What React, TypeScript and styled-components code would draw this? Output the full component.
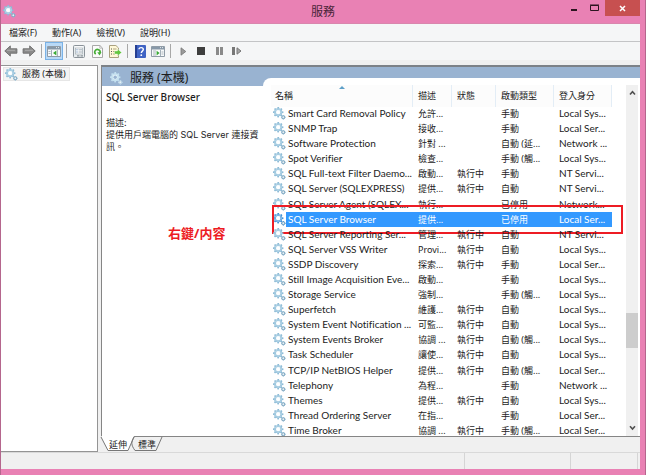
import React from "react";
import styled, { createGlobalStyle, css } from "styled-components";

const Global = createGlobalStyle`
  *, *::before, *::after { box-sizing: border-box; }
  html, body, #root { height: 100%; margin: 0; }
  body {
    font-family: "Noto Sans", "Noto Sans CJK TC", sans-serif;
    font-size: 10px;
    font-variant-ligatures: none;
    color: #1c1c1c;
    overflow: hidden;
  }
  button { font: inherit; color: inherit; background: none; border: 0; padding: 0; margin: 0; }
  svg { flex: none; }
`;

const Frame = styled.div`
  height: 100%;
  display: flex;
  flex-direction: column;
  background: #e981b4;
  border-left: 1px solid #b5668d;
  border-right: 1px solid #b5668d;
`;

const TitleBar = styled.header`
  flex: none;
  height: 23px;
  display: grid;
  grid-template-columns: 1fr auto 1fr;
  align-items: start;
`;

const TitleIcon = styled.span`
  display: flex;
  padding: 5px 0 0 2px;
`;

const Title = styled.h1`
  margin: 0;
  font-size: 12px;
  line-height: 24px;
  font-weight: 400;
  color: #4a2438;
`;

const WindowButtons = styled.div`
  display: flex;
  justify-content: flex-end;
  padding-right: 5px;
`;

const WindowButton = styled.button<{ $close?: boolean }>`
  width: ${(p) => (p.$close ? 35 : 21)}px;
  height: 16px;
  display: flex;
  align-items: center;
  justify-content: center;
  background: ${(p) => (p.$close ? "#c75050" : "transparent")};
`;

const Client = styled.div`
  flex: 1;
  min-height: 0;
  margin: 0 5px 6px 0;
  display: flex;
  flex-direction: column;
  background: #f0f0f0;
  border-top: 1px solid #d986ad;
`;

const MenuBar = styled.nav`
  flex: none;
  height: 18px;
  display: flex;
  align-items: center;
  gap: 15px;
  padding-left: 8px;
  background: #f5f6f7;
  border-bottom: 1px solid #c3c4c6;
`;

const MenuItem = styled.button`
  font-size: 9px;
  line-height: 16px;
  white-space: nowrap;
`;

const ToolBar = styled.div`
  flex: none;
  height: 18px;
  display: flex;
  align-items: center;
  background: #f5f6f7;
  padding-left: 1px;
`;

const Tool = styled.button<{ $active?: boolean }>`
  width: 18px;
  height: 18px;
  display: flex;
  align-items: center;
  justify-content: center;
  ${(p) =>
    p.$active &&
    css`
      background: #b9d9f7;
      border: 1px solid #7ab2e6;
    `}
`;

const Separator = styled.span`
  width: 1px;
  height: 14px;
  margin: 0 3px;
  background: #a8a8a8;
`;

const Panes = styled.div`
  flex: 1;
  min-height: 0;
  display: grid;
  grid-template-columns: minmax(0, 97fr) minmax(0, 539fr);
  column-gap: 3px;
  padding-top: 5px;
`;

const TreePane = styled.aside`
  background: #fff;
  border: 1px solid #949494;
  border-left: 0;
  padding: 1px 2px;
`;

const TreeItem = styled.button`
  display: flex;
  align-items: center;
  gap: 4px;
  height: 14px;
  padding: 0 3px 0 1px;
  background: #f4f4f4;
  border: 1px solid #e6e6e6;
  font-size: 9px;
  line-height: 12px;
  white-space: nowrap;
`;

const MainPane = styled.main`
  min-width: 0;
  min-height: 0;
  display: flex;
  flex-direction: column;
`;

const View = styled.div`
  flex: 1;
  min-height: 0;
  display: grid;
  grid-template-columns: minmax(0, 161fr) minmax(0, 377fr);
  background: #99b3d1;
  border: 1px solid #858585;
  border-top: 2px solid #7c8187;
  border-right: 0;
`;

const Detail = styled.section`
  position: relative;
  display: flex;
  flex-direction: column;
`;

const DetailHead = styled.div`
  flex: none;
  height: 19px;
  display: flex;
  align-items: center;
  gap: 7px;
  padding: 3px 0 0 8px;
  font-size: 12px;
  line-height: 16px;
  white-space: nowrap;
`;

const DetailBody = styled.div`
  flex: 1;
  background: #fff;
  padding: 4px 0 0 4px;
`;

const ServiceName = styled.h2`
  margin: 0 0 13px;
  font-size: 10px;
  line-height: 14px;
  font-weight: 500;
`;

const Description = styled.p`
  margin: 0;
  font-family: "Inter", "Noto Sans CJK TC", sans-serif;
  font-size: 9px;
  line-height: 12px;
`;

const Annotation = styled.strong`
  position: absolute;
  left: 66px;
  top: 157px;
  font-size: 13px;
  line-height: 18px;
  color: #ed1c24;
  white-space: nowrap;
`;

const ListArea = styled.section`
  min-width: 0;
  min-height: 0;
  margin-top: 11px;
  display: flex;
  background: #fff;
  border-top-left-radius: 8px;
  padding: 7px 2px 0 8px;
  overflow: hidden;
`;

const Table = styled.table`
  flex: 1;
  min-width: 0;
  margin-bottom: -2px;
  display: flex;
  flex-direction: column;
`;

const Head = styled.thead`
  flex: none;
  display: block;
`;

const Body = styled.tbody`
  flex: 1;
  min-height: 0;
  display: grid;
  grid-auto-rows: minmax(0, 1fr);
`;

const rowColumns = css`
  display: grid;
  grid-template-columns: minmax(0, 142fr) minmax(0, 39fr) minmax(0, 44fr) minmax(0, 58fr) minmax(0, 58fr) minmax(0, 14fr);
`;

const HeadRow = styled.tr`
  ${rowColumns}
  height: 21px;
`;

const HeadCell = styled.th`
  position: relative;
  padding: 0 0 0 5px;
  font-size: 9px;
  line-height: 22px;
  font-weight: 400;
  text-align: left;
  white-space: nowrap;
  border-right: 1px solid #e3edf6;
  background: #fcfcfc;
  &:first-child { padding-left: 4px; }
  &:last-child { border: 0; background: #fff; }
`;

const SortMark = styled.svg`
  position: absolute;
  left: 48%;
  top: 1px;
`;

const Row = styled.tr<{ $selected?: boolean }>`
  ${rowColumns}
  position: relative;
  align-items: center;
  color: ${(p) => (p.$selected ? "#fff" : "inherit")};
`;

const Cell = styled.td<{ $selected?: boolean; $cjk?: boolean }>`
  height: 100%;
  min-width: 0;
  padding: 0 0 0 5px;
  font-family: ${(p) => (p.$cjk ? "inherit" : '"Lato", "Noto Sans CJK TC", sans-serif')};
  font-size: ${(p) => (p.$cjk ? 9 : 10)}px;
  line-height: 15px;
  white-space: nowrap;
  overflow: hidden;
  background: ${(p) => (p.$selected ? "#3399ff" : "transparent")};
`;

const NameCell = styled(Cell)`
  display: flex;
  align-items: center;
  padding: 0 0 0 2px;
  background: none;
`;

const NameText = styled.span<{ $selected?: boolean }>`
  flex: 1;
  height: 100%;
  padding-left: 2px;
  background: ${(p) => (p.$selected ? "#3399ff" : "transparent")};
`;

const Highlight = styled.td`
  position: absolute;
  inset: -7px 3px -7px 1px;
  border: 2px solid #ed1c24;
  padding: 0;
  pointer-events: none;
`;

const ScrollBar = styled.div`
  flex: none;
  width: 12px;
  display: flex;
  flex-direction: column;
  align-items: stretch;
  background: #f0f0f0;
`;

const ScrollButton = styled.button`
  height: 16px;
  display: flex;
  align-items: center;
  justify-content: center;
`;

const Track = styled.div`
  flex: 1;
  display: grid;
  grid-template-rows: 212fr 35fr 72fr;
`;

const Thumb = styled.div`
  grid-row: 2;
  background: #cdcdcd;
`;

const Tabs = styled.div`
  flex: none;
  display: flex;
  height: 15px;
`;

const Tab = styled.button<{ $active?: boolean }>`
  position: relative;
  width: ${(p) => (p.$active ? 33 : 29)}px;
  height: 14px;
  font-size: 9px;
  line-height: 13px;
  text-align: left;
  padding-left: ${(p) => (p.$active ? 8 : 4)}px;
`;

const TabShape = styled.svg`
  position: absolute;
  left: 0;
  top: 0;
  overflow: visible;
`;

const TabLabel = styled.span`
  position: relative;
`;

const StatusBar = styled.footer`
  flex: none;
  height: 17px;
  display: grid;
  grid-template-columns: 464fr 106fr 67fr 2fr;
  border-top: 1px solid #d9d9d9;
`;

const StatusCell = styled.div`
  border-right: 1px solid #d5d5d5;
  &:last-child { border: 0; }
`;

const teeth = [0, 45, 90, 135, 180, 225, 270, 315];

function Gears({ size = 13, pale, solid }: { size?: number; pale?: boolean; solid?: boolean }) {
  const main = solid ? "#3d8fd6" : pale ? "#c4e0f0" : "#8dbbd6";
  return (
    <svg width={size} height={size} viewBox="0 0 13 13" aria-hidden="true">
      {teeth.map((a) => (
        <rect key={a} x="4.4" y="0" width="1.7" height="2" fill={main} transform={`rotate(${a} 5.2 5.2)`} />
      ))}
      <circle cx="5.2" cy="5.2" r="3.2" fill="#e9f5fb" stroke={main} strokeWidth="1.7" />
      <circle cx="5.2" cy="5.2" r="3.3" fill="none" stroke="#c9e4f2" strokeWidth=".6" />
      <circle cx="5.2" cy="5.2" r="1.7" fill={pale ? "#99b3d1" : "#fff"} />
      <circle cx="10.3" cy="10.3" r="1.5" fill="#e8f1f5" stroke={pale ? "#b5cfe2" : "#84a9c1"} strokeWidth="1.1" />
      <path d="M10.3 8v1M10.3 11.7v1M8 10.3h1M11.7 10.3h1" stroke={main} strokeWidth=".9" />
    </svg>
  );
}

function Arrow({ right }: { right?: boolean }) {
  return (
    <svg width="14" height="12" viewBox="0 0 14 12" aria-hidden="true">
      <path
        d="M.8 6 6.3.9v2.9h6.6v4.4H6.3v2.9z"
        fill="#8b8b8b"
        stroke="#6c6c6c"
        strokeWidth=".9"
        transform={right ? "translate(14 0) scale(-1 1)" : undefined}
      />
      <path d="M3 5.3h8" stroke="#adadad" />
    </svg>
  );
}

function ConsoleIcon({ right }: { right?: boolean }) {
  return (
    <svg width="14" height="12" viewBox="0 0 14 12" aria-hidden="true">
      <path d="M.5 1.5h13v10H.5z" fill="#f8fafb" stroke="#8f9ba6" />
      <path d="M1 2h12v2H1z" fill="#8798a8" />
      <path d="M9 2.6h1M11 2.6h1" stroke="#fff" strokeWidth=".8" />
      <path d="M1 4.5h12" stroke="#c1c9d0" />
      {right ? (
        <>
          <path d="M9.5 5v6" stroke="#a3afb9" />
          <path d="M2 6h3M2 8h3M2 10h3M10.5 7h2M10.5 9h2" stroke="#9aa5ae" strokeWidth=".8" />
          <path d="M5.6 5.8 8.6 8l-3 2.4z" fill="#39a935" />
        </>
      ) : (
        <>
          <path d="M4.5 5v6" stroke="#a3afb9" />
          <path d="M1.5 6.5h2M1.5 8.5h2M10.5 5v6" stroke="#9aa5ae" strokeWidth=".8" />
          <path d="M9.4 5.6 6 8l3.4 2.4z" fill="#39a935" />
        </>
      )}
    </svg>
  );
}

function PropertiesIcon() {
  return (
    <svg width="12" height="13" viewBox="0 0 12 13" aria-hidden="true">
      <rect x=".5" y=".5" width="11" height="12" rx="1" fill="#e7ecef" stroke="#8a9299" />
      <rect x="2.5" y="3" width="7" height="6" fill="#fff" stroke="#aab3ba" strokeWidth=".8" />
      <path d="M2 1.8h8" stroke="#fff" />
      <path d="M3.5 4.8h1M3.5 7h1" stroke="#3f6ea5" />
      <path d="M5.5 4.8H9M5.5 7H9" stroke="#8998a5" strokeWidth=".8" />
      <path d="M4 10.9h2.5M7.5 10.9H10" stroke="#8a9299" strokeWidth="1.2" />
    </svg>
  );
}

function RefreshIcon() {
  return (
    <svg width="11" height="13" viewBox="0 0 11 13" aria-hidden="true">
      <path d="M.5.5h7.4l2.6 2.6v9.4H.5z" fill="#fbfbfb" stroke="#a8a8a8" />
      <path d="M7.8.5v2.7h2.7" fill="none" stroke="#a8a8a8" strokeWidth=".7" />
      <path d="M3.7 9.2A2.7 2.7 0 1 1 8 8" fill="none" stroke="#45ad36" strokeWidth="1.6" />
      <path d="M5.3 7.3h4.2L7.5 10.5z" fill="#45ad36" />
    </svg>
  );
}

function ExportIcon() {
  return (
    <svg width="13" height="13" viewBox="0 0 13 13" aria-hidden="true">
      <path d="M.5.5h6.4L9.5 3v9.5H.5z" fill="#fff8d8" stroke="#aaa17f" />
      <path d="M2 4h1M2 6.5h1M2 9h1" stroke="#555" />
      <path d="M4 4h3.5M4 6.5h2M4 9h2" stroke="#a59b77" strokeWidth=".9" />
      <path d="M5.5 6h3V3.9l4.2 3.6L8.5 11V9h-3z" fill="#62c53e" stroke="#fff" strokeWidth=".4" />
    </svg>
  );
}

function HelpIcon() {
  return (
    <svg width="11" height="13" viewBox="0 0 11 13" aria-hidden="true">
      <rect width="11" height="13" rx="1" fill="#3f63c4" />
      <path d="M0 0h2v13H0z" fill="#263f91" />
      <path d="M4 4.3C4 2 8.3 2 8.3 4.5c0 1.7-2 1.6-2 3.6" fill="none" stroke="#fff" strokeWidth="1.4" />
      <circle cx="6.3" cy="10.2" r=".9" fill="#fff" />
    </svg>
  );
}

function Chevron({ down }: { down?: boolean }) {
  return (
    <svg width="7" height="6" viewBox="0 0 7 6" aria-hidden="true">
      <path d={down ? "M1 1.2 3.5 4 6 1.2" : "M1 4.5 3.5 1.7 6 4.5"} fill="none" stroke="#505050" strokeWidth="1.6" />
    </svg>
  );
}

type Service = [string, string, string, string, string];

const services: Service[] = [
  ["Smart Card Removal Policy", "允許...", "", "手動", "Local Sys..."],
  ["SNMP Trap", "接收...", "", "手動", "Local Ser..."],
  ["Software Protection", "針對 ...", "", "自動 (延...", "Network ..."],
  ["Spot Verifier", "檢查...", "", "手動 (觸...", "Local Sys..."],
  ["SQL Full-text Filter Daemo...", "啟動...", "執行中", "手動", "NT Servi..."],
  ["SQL Server (SQLEXPRESS)", "提供...", "執行中", "自動", "NT Servi..."],
  ["SQL Server Agent (SQLEX...", "執行...", "", "已停用", "Network..."],
  ["SQL Server Browser", "提供...", "", "已停用", "Local Ser..."],
  ["SQL Server Reporting Ser...", "管理...", "執行中", "自動", "NT Servi..."],
  ["SQL Server VSS Writer", "Provi...", "執行中", "自動", "Local Sys..."],
  ["SSDP Discovery", "探索...", "執行中", "手動", "Local Ser..."],
  ["Still Image Acquisition Eve...", "啟動...", "", "手動", "Local Sys..."],
  ["Storage Service", "強制...", "", "手動 (觸...", "Local Sys..."],
  ["Superfetch", "維護...", "執行中", "自動", "Local Sys..."],
  ["System Event Notification ...", "可監...", "執行中", "自動", "Local Sys..."],
  ["System Events Broker", "協調 ...", "執行中", "自動 (觸...", "Local Sys..."],
  ["Task Scheduler", "讓使...", "執行中", "自動", "Local Sys..."],
  ["TCP/IP NetBIOS Helper", "提供...", "執行中", "自動 (觸...", "Local Ser..."],
  ["Telephony", "為程...", "", "手動", "Network ..."],
  ["Themes", "提供...", "執行中", "自動", "Local Sys..."],
  ["Thread Ordering Server", "在指...", "", "手動", "Local Ser..."],
  ["Time Broker", "協調 ...", "執行中", "手動 (觸...", "Local Ser..."],
];

const selectedName = "SQL Server Browser";

export default function App() {
  return (
    <>
      <Global />
      <Frame>
        <TitleBar>
          <TitleIcon><Gears size={13} /></TitleIcon>
          <Title>服務</Title>
          <WindowButtons>
            <WindowButton aria-label="Minimize">
              <svg width="8" height="8" aria-hidden="true"><path d="M1 6h6" stroke="#2c1420" strokeWidth="2" /></svg>
            </WindowButton>
            <WindowButton aria-label="Maximize">
              <svg width="9" height="8" aria-hidden="true"><path d="M.5 1.5h8v5h-8zM0 1h9" fill="none" stroke="#2c1420" /></svg>
            </WindowButton>
            <WindowButton $close aria-label="Close">
              <svg width="7" height="7" aria-hidden="true"><path d="m1 1 5 5M6 1 1 6" stroke="#fff" strokeWidth="1.5" /></svg>
            </WindowButton>
          </WindowButtons>
        </TitleBar>
        <Client>
          <MenuBar>
            {["檔案(F)", "動作(A)", "檢視(V)", "說明(H)"].map((m) => (
              <MenuItem key={m}>{m}</MenuItem>
            ))}
          </MenuBar>
          <ToolBar>
            <Tool aria-label="Back"><Arrow /></Tool>
            <Tool aria-label="Forward"><Arrow right /></Tool>
            <Separator />
            <Tool $active aria-label="Console tree"><ConsoleIcon /></Tool>
            <Separator />
            <Tool aria-label="Properties"><PropertiesIcon /></Tool>
            <Tool aria-label="Refresh"><RefreshIcon /></Tool>
            <Tool aria-label="Export list"><ExportIcon /></Tool>
            <Separator />
            <Tool aria-label="Help"><HelpIcon /></Tool>
            <Tool aria-label="Action pane"><ConsoleIcon right /></Tool>
            <Separator />
            <Tool aria-label="Start">
              <svg width="7" height="9" aria-hidden="true"><path d="M1 .8 5.8 4.5 1 8.2z" fill="#9b9b9b" stroke="#777" strokeWidth=".8" /></svg>
            </Tool>
            <Tool aria-label="Stop">
              <svg width="8" height="8" aria-hidden="true"><path d="M0 0h8v8H0z" fill="#3e3e3e" /></svg>
            </Tool>
            <Tool aria-label="Pause">
              <svg width="7" height="8" aria-hidden="true"><path d="M0 0h3v8H0zM4 0h3v8H4z" fill="#8a8a8a" /></svg>
            </Tool>
            <Tool aria-label="Restart">
              <svg width="10" height="8" aria-hidden="true"><path d="M0 0h3v8H0z" fill="#777" /><path d="M5 .8 9 4 5 7.2z" fill="#a7a7a7" stroke="#777" /></svg>
            </Tool>
          </ToolBar>
          <Panes>
            <TreePane>
              <TreeItem><Gears size={13} />服務 (本機)</TreeItem>
            </TreePane>
            <MainPane>
              <View>
                <Detail>
                  <DetailHead><Gears pale size={13} />服務 (本機)</DetailHead>
                  <DetailBody>
                    <ServiceName>{selectedName}</ServiceName>
                    <Description>描述:</Description>
                    <Description>提供用戶端電腦的 SQL Server 連接資訊。</Description>
                  </DetailBody>
                  <Annotation>右鍵/内容</Annotation>
                </Detail>
                <ListArea>
                  <Table>
                    <Head>
                      <HeadRow>
                        <HeadCell>
                          名稱
                          <SortMark width="6" height="3" aria-hidden="true"><path d="M0 3 3 0l3 3z" fill="#5d9fc8" /></SortMark>
                        </HeadCell>
                        <HeadCell>描述</HeadCell>
                        <HeadCell>狀態</HeadCell>
                        <HeadCell>啟動類型</HeadCell>
                        <HeadCell>登入身分</HeadCell>
                        <HeadCell />
                      </HeadRow>
                    </Head>
                    <Body>
                      {services.map(([name, description, status, startup, account]) => {
                        const selected = name === selectedName;
                        return (
                          <Row key={name} $selected={selected}>
                            <NameCell>
                              <Gears size={13} solid={selected} />
                              <NameText $selected={selected}>{name}</NameText>
                            </NameCell>
                            <Cell $cjk $selected={selected}>{description}</Cell>
                            <Cell $cjk $selected={selected}>{status}</Cell>
                            <Cell $cjk $selected={selected}>{startup}</Cell>
                            <Cell $selected={selected}>{account}</Cell>
                            {selected && <Highlight />}
                          </Row>
                        );
                      })}
                    </Body>
                  </Table>
                  <ScrollBar>
                    <ScrollButton aria-label="Scroll up"><Chevron /></ScrollButton>
                    <Track><Thumb /></Track>
                    <ScrollButton aria-label="Scroll down"><Chevron down /></ScrollButton>
                  </ScrollBar>
                </ListArea>
              </View>
              <Tabs>
                <Tab $active>
                  <TabShape width="33" height="14" aria-hidden="true">
                    <path d="M0-1 7 13.5h20L33-1z" fill="#fff" />
                    <path d="M0 0 7 13.5h20L33 0" fill="none" stroke="#777" />
                  </TabShape>
                  <TabLabel>延伸</TabLabel>
                </Tab>
                <Tab>
                  <TabShape width="29" height="14" aria-hidden="true">
                    <path d="M0 0c-3 5-3 8 1 13.5h21L28 0" fill="none" stroke="#777" />
                  </TabShape>
                  <TabLabel>標準</TabLabel>
                </Tab>
              </Tabs>
            </MainPane>
          </Panes>
          <StatusBar>
            <StatusCell /><StatusCell /><StatusCell /><StatusCell />
          </StatusBar>
        </Client>
      </Frame>
    </>
  );
}
